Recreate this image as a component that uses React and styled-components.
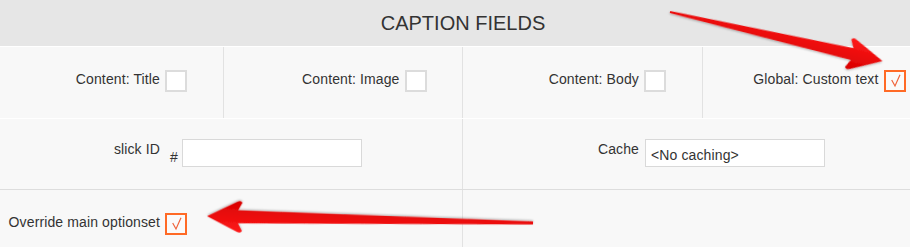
import React from "react";
import styled, { createGlobalStyle } from "styled-components";

const GlobalStyle = createGlobalStyle`
  html, body {
    margin: 0;
    padding: 0;
    background: #f8f8f8;
    overflow: hidden;
  }
  body {
    font-family: "Liberation Sans", Arial, sans-serif;
    color: #333;
  }
`;

const Stage = styled.div`
  position: relative;
  width: 910px;
  height: 247px;
  overflow: hidden;
`;

const Page = styled.div`
  width: 958px;
  margin-left: -16px;
`;

const Header = styled.div`
  height: 46px;
  line-height: 46px;
  background: #e6e6e6;
  border-bottom: 1px solid #fff;
  text-align: center;
  font-size: 20px;
  color: #333;
`;

const Row = styled.div`
  display: grid;
  grid-template-columns: repeat(${({ cols }) => cols}, 1fr);
  height: ${({ h }) => h}px;
  border-bottom: 1px solid ${({ line }) => line};
`;

const Cell = styled.div`
  display: flex;
  align-items: flex-start;
  padding-top: ${({ top }) => top}px;
  border-right: 1px solid #e2e2e2;
  &:last-child {
    border-right: none;
  }
`;

const Label = styled.label`
  width: 176px;
  flex: none;
  text-align: right;
  font-size: 14px;
  line-height: 18px;
  letter-spacing: 0.12px;
  margin-top: ${({ shift = 0 }) => shift}px;
  margin-right: ${({ gap = 5 }) => gap}px;
  white-space: nowrap;
`;

const Box = styled.span`
  width: 22px;
  height: 22px;
  box-sizing: border-box;
  flex: none;
  border: 2px solid ${({ checked }) => (checked ? "#ff6a26" : "#dcdcdc")};
  background: ${({ checked }) => (checked ? "#fafafa" : "#fff")};
  display: flex;
  align-items: center;
  justify-content: center;
`;

const Prefix = styled.span`
  font-size: 14px;
  line-height: 18px;
  margin-top: 9px;
  margin-right: 4px;
`;

const Input = styled.div`
  width: 180px;
  height: 28px;
  box-sizing: border-box;
  border: 1px solid #d9d9d9;
  background: #fff;
  font-size: 14px;
  line-height: 30px;
  letter-spacing: 0.12px;
  padding-left: 5px;
  color: #333;
`;

const Overlay = styled.svg`
  position: absolute;
  left: 0;
  top: 0;
  pointer-events: none;
`;

const Check = ({ checked }) => (
  <Box checked={checked}>
    {checked && (
      <svg width="18" height="18" viewBox="0 0 18 18">
        <path d="M5.7 8 L9 14 L14 2.7" fill="none" stroke="#f0643c" strokeWidth="1.2" />
      </svg>
    )}
  </Box>
);

const arrowPath = (len, tail, base, wing) => {
  const b = len - 31;
  return `M0 ${-tail} L${b} ${-base} L${b - 4} ${-wing + 2} Q${b - 3} ${-wing - 1} ${b + 1} ${-wing + 1} L${len} 0 L${b + 1} ${wing - 1} Q${b - 3} ${wing + 1} ${b - 4} ${wing - 2} L${b} ${base} L0 ${tail} Z`;
};

const Arrows = () => (
  <Overlay width="910" height="247">
    <defs>
      <filter id="sh" x="-10%" y="-50%" width="120%" height="200%">
        <feDropShadow dx="0" dy="1" stdDeviation="1" floodColor="#000" floodOpacity="0.3" />
      </filter>
      <linearGradient id="rg" x1="0" y1="0" x2="0" y2="1">
        <stop offset="0" stopColor="#ff1a1a" />
        <stop offset="1" stopColor="#d80000" />
      </linearGradient>
    </defs>
    <g transform="translate(670 12) rotate(13)" filter="url(#sh)">
      <path d={arrowPath(218, 1, 6, 16)} fill="url(#rg)" />
    </g>
    <g transform="translate(533 223) rotate(181.2)" filter="url(#sh)">
      <path d={arrowPath(326, 1.5, 6.5, 16)} fill="url(#rg)" />
    </g>
  </Overlay>
);

export default function App() {
  return (
    <>
      <GlobalStyle />
      <Stage>
        <Page>
          <Header>CAPTION FIELDS</Header>
          <Row cols={4} h={71} line="#fff">
            <Cell top={23}>
              <Label>Content: Title</Label>
              <Check />
            </Cell>
            <Cell top={23}>
              <Label>Content: Image</Label>
              <Check />
            </Cell>
            <Cell top={23}>
              <Label>Content: Body</Label>
              <Check />
            </Cell>
            <Cell top={23}>
              <Label>Global: Custom text</Label>
              <Check checked />
            </Cell>
          </Row>
          <Row cols={2} h={70} line="#ddd">
            <Cell top={20}>
              <Label shift={1} gap={10}>slick ID</Label>
              <Prefix>#</Prefix>
              <Input />
            </Cell>
            <Cell top={20}>
              <Label shift={1} gap={6}>Cache</Label>
              <Input>&lt;No caching&gt;</Input>
            </Cell>
          </Row>
          <Row cols={2} h={57} line="transparent">
            <Cell top={23}>
              <Label>Override main optionset</Label>
              <Check checked />
            </Cell>
            <Cell top={23} />
          </Row>
        </Page>
        <Arrows />
      </Stage>
    </>
  );
}
